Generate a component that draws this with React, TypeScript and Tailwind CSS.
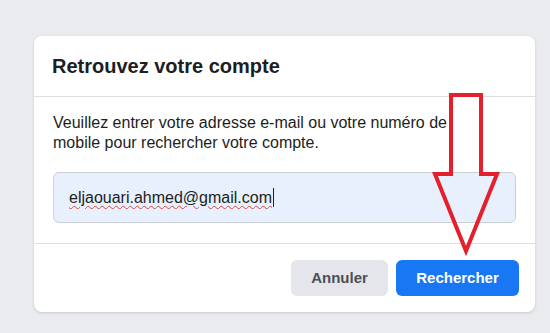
import React from 'react';

const App: React.FC = () => {
  return (
    <div
      className="relative w-[550px] h-[333px] bg-[#e9ebee] overflow-hidden pt-[36px] pl-[34px]"
      style={{ fontFamily: '"Liberation Sans", Arial, sans-serif' }}
    >
      {/* Card */}
      <div className="w-[501px] bg-white rounded-lg shadow-[0_1px_3px_rgba(0,0,0,0.15)]">
        {/* Header */}
        <div className="px-[18px] py-[18px] border-b border-[#dddfe2]">
          <h2 className="text-[20px] leading-[24px] font-bold text-[#1c1e21]">Retrouvez votre compte</h2>
        </div>

        {/* Body */}
        <div className="px-[19px] pt-[16px] pb-[20px] border-b border-[#dddfe2]">
          <p className="text-[16px] leading-[20px] text-[#1c1e21] pr-[40px]">
            Veuillez entrer votre adresse e-mail ou votre numéro de mobile pour rechercher votre compte.
          </p>
          <div className="mt-[19px] h-[51px] flex items-center px-[15px] bg-[#e8f0fe] border border-[#ccd0d5] rounded-md">
            <span className="text-[16px] text-[#1c1e21] underline decoration-wavy decoration-[#e0443e] decoration-1 underline-offset-2">
              eljaouari.ahmed@gmail.com
            </span>
            <span className="w-px h-[19px] bg-[#1c1e21] ml-px" />
          </div>
        </div>

        {/* Footer */}
        <div className="flex justify-end gap-[8px] px-[16px] py-[16px]">
          <button className="w-[97px] h-[36px] rounded-md bg-[#e4e6eb] text-[#4b4f56] text-[15px] font-bold">
            Annuler
          </button>
          <button className="w-[123px] h-[36px] rounded-md bg-[#1877f2] text-white text-[15px] font-bold">
            Rechercher
          </button>
        </div>
      </div>

      {/* Red annotation arrow */}
      <svg className="absolute left-0 top-0 pointer-events-none" width="550" height="333" viewBox="0 0 550 333">
        <path
          d="M451 95 L481 95 L481 174 L497 174 L466 251 L435 174 L451 174 Z"
          fill="none"
          stroke="#e3202b"
          strokeWidth="4"
          strokeLinejoin="miter"
        />
      </svg>
    </div>
  );
};

export default App;
